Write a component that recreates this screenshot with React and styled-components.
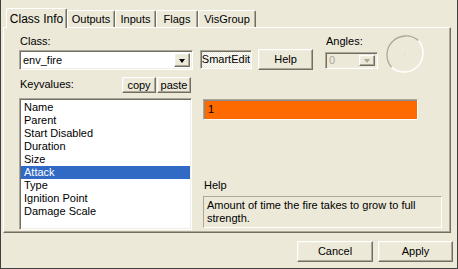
import React from "react";
import styled, { createGlobalStyle, css } from "styled-components";

const Global = createGlobalStyle`
  html, body { margin: 0; padding: 0; background: #ECE9D8; }
  body { font-family: Tahoma, "Liberation Sans", Arial, sans-serif; font-size: 11px; color: #000; }
  * { box-sizing: border-box; }
`;

const raised = css`
  border: 1px solid;
  border-color: #fff #716F64 #716F64 #fff;
  box-shadow: inset -1px -1px #ACA899, inset 1px 1px #F1EFE2;
  background: #ECE9D8;
`;

const sunken = css`
  border: 1px solid;
  border-color: #ACA899 #fff #fff #ACA899;
  box-shadow: inset 1px 1px #716F64, inset -1px -1px #F1EFE2;
`;

const Window = styled.div`
  width: 458px;
  height: 269px;
  background: #ECE9D8;
  border-left: 1px solid #404040;
  border-right: 1px solid #404040;
  border-bottom: 1px solid #404040;
  display: flex;
  flex-direction: column;
  overflow: hidden;
`;

const TabBar = styled.div`
  display: flex;
  align-items: flex-end;
  padding: 8px 0 0 5px;
  height: 28px;
  position: relative;
  z-index: 2;
  margin-bottom: -1px;
`;

const Tab = styled.div`
  height: ${p => (p.$active ? "20px" : "17px")};
  padding: 0 ${p => (p.$active ? "7px" : "5px")};
  margin-bottom: ${p => (p.$active ? "0" : "1px")};
  display: flex;
  align-items: center;
  justify-content: center;
  background: #ECE9D8;
  border-top: 1px solid #fff;
  border-left: 1px solid #fff;
  border-right: 1px solid #716F64;
  box-shadow: inset -1px 0 #ACA899;
  border-radius: 2px 2px 0 0;
  font-size: ${p => (p.$active ? "12px" : "11px")};
  white-space: nowrap;
  width: ${p => p.$w}px;
`;

const Panel = styled.div`
  margin: 0 6px 0 2px;
  height: 206px;
  border: 1px solid;
  border-color: #fff #716F64 #716F64 #fff;
  box-shadow: inset -1px -1px #ACA899;
  padding: 7px 0 0 15px;
  display: flex;
  flex-direction: column;
`;

const TopRow = styled.div`
  display: flex;
  align-items: flex-start;
  height: 35px;
`;

const Col = styled.div`
  display: flex;
  flex-direction: column;
  width: ${p => p.$w}px;
  margin-left: ${p => p.$ml || 0}px;
  margin-top: ${p => p.$mt || 0}px;
`;

const Label = styled.div`
  height: 13px;
  line-height: 13px;
  margin-left: ${p => p.$ml || 1}px;
  margin-bottom: ${p => p.$mb || 0}px;
  margin-top: ${p => p.$mt || 0}px;
`;

const Combo = styled.div`
  ${sunken};
  height: ${p => p.$h}px;
  width: ${p => p.$w}px;
  background: ${p => (p.$disabled ? "#ECE9D8" : "#fff")};
  color: ${p => (p.$disabled ? "#ACA899" : "#000")};
  display: flex;
  align-items: center;
  padding: 2px 2px 2px 3px;
`;

const ComboText = styled.div`
  flex: 1;
  line-height: 13px;
`;

const DropBtn = styled.div`
  ${raised};
  width: 16px;
  height: 100%;
  display: flex;
  align-items: center;
  justify-content: center;
`;

const Arrow = styled.div`
  width: 0;
  height: 0;
  border-left: 3.5px solid transparent;
  border-right: 3.5px solid transparent;
  border-top: 4px solid ${p => (p.$disabled ? "#ACA899" : "#000")};
  margin-top: 1px;
`;

const Button = styled.div`
  ${p => (p.$pressed ? sunken : raised)};
  ${p =>
    p.$pressed &&
    css`
      background-color: #F7F6F1;
      background-image: repeating-conic-gradient(#fff 0 25%, #ECE9D8 0 50%);
      background-size: 2px 2px;
    `}
  width: ${p => p.$w}px;
  height: ${p => p.$h}px;
  margin-left: ${p => p.$ml || 0}px;
  margin-top: ${p => p.$mt || 0}px;
  display: flex;
  align-items: center;
  justify-content: center;
  line-height: 13px;
  white-space: nowrap;
`;

const Dial = styled.svg`
  margin-left: 6px;
  margin-top: -1px;
  flex: none;
`;

const KeyRow = styled.div`
  display: flex;
  align-items: flex-start;
  width: 174px;
  margin-top: 7px;
`;

const Spacer = styled.div`
  flex: 1;
`;

const MainRow = styled.div`
  display: flex;
  align-items: flex-start;
  margin-top: 5px;
`;

const List = styled.div`
  ${sunken};
  background: #fff;
  width: 173px;
  height: 132px;
  padding: 2px 1px;
`;

const Item = styled.div`
  height: 13px;
  line-height: 13px;
  padding-left: 3px;
  background: ${p => (p.$sel ? "#316AC5" : "transparent")};
  color: ${p => (p.$sel ? "#fff" : "#000")};
`;

const RightCol = styled.div`
  display: flex;
  flex-direction: column;
  margin-left: 11px;
`;

const ValueBox = styled.div`
  ${sunken};
  box-shadow: inset 1px 1px #8C8A80;
  background: #FF6A00;
  width: 215px;
  height: 21px;
  margin-top: 1px;
  padding: 2px 4px;
  line-height: 15px;
`;

const HelpBox = styled.div`
  border: 1px solid;
  border-color: #ACA899 #fff #fff #ACA899;
  width: 239px;
  height: 32px;
  padding: 2px 3px;
  line-height: 13px;
`;

const Footer = styled.div`
  display: flex;
  justify-content: flex-end;
  gap: 5px;
  padding: 8px 4px 0 0;
`;

const items = [
  "Name",
  "Parent",
  "Start Disabled",
  "Duration",
  "Size",
  "Attack",
  "Type",
  "Ignition Point",
  "Damage Scale",
];

const tabs = [
  ["Class Info", 61],
  ["Outputs", 48],
  ["Inputs", 41],
  ["Flags", 42],
  ["VisGroup", 58],
];

export default function App() {
  return (
    <>
      <Global />
      <Window>
        <TabBar>
          {tabs.map(([t, w], i) => (
            <Tab key={t} $active={i === 0} $w={w}>
              {t}
            </Tab>
          ))}
        </TabBar>
        <Panel>
          <TopRow>
            <Col $w={174}>
              <Label $mb={2}>Class:</Label>
              <Combo $w={174} $h={20}>
                <ComboText>env_fire</ComboText>
                <DropBtn>
                  <Arrow />
                </DropBtn>
              </Combo>
            </Col>
            <Button $pressed $w={52} $h={19} $ml={7} $mt={15}>
              SmartEdit
            </Button>
            <Button $w={55} $h={21} $ml={6} $mt={14}>
              Help
            </Button>
            <Col $w={54} $ml={12}>
              <Label $ml={0}>Angles:</Label>
              <Combo $w={53} $h={17} $disabled style={{ marginTop: 4 }}>
                <ComboText>0</ComboText>
                <DropBtn>
                  <Arrow $disabled />
                </DropBtn>
              </Combo>
            </Col>
            <Dial width="40" height="40" viewBox="0 0 40 40">
              <path d="M6.6 33.4 A19 19 0 0 1 33.4 6.6" fill="none" stroke="#ACA899" strokeWidth="1.3" />
              <path d="M33.4 6.6 A19 19 0 0 1 6.6 33.4" fill="none" stroke="#fff" strokeWidth="1.5" />
              <circle cx="20" cy="20" r="0.8" fill="#DAD6C4" />
            </Dial>
          </TopRow>
          <KeyRow>
            <Label $mt={1}>Keyvalues:</Label>
            <Spacer />
            <Button $w={34} $h={16}>copy</Button>
            <Button $w={34} $h={16} $ml={1}>paste</Button>
            <div style={{ width: 2 }} />
          </KeyRow>
          <MainRow>
            <List>
              {items.map(it => (
                <Item key={it} $sel={it === "Attack"}>
                  {it}
                </Item>
              ))}
            </List>
            <RightCol>
              <ValueBox>1</ValueBox>
              <Label $ml={0} $mt={59}>Help</Label>
              <HelpBox style={{ marginTop: 4 }}>
                Amount of time the fire takes to grow to full strength.
              </HelpBox>
            </RightCol>
          </MainRow>
        </Panel>
        <Footer>
          <Button $w={76} $h={21}>Cancel</Button>
          <Button $w={75} $h={21}>Apply</Button>
        </Footer>
      </Window>
    </>
  );
}
